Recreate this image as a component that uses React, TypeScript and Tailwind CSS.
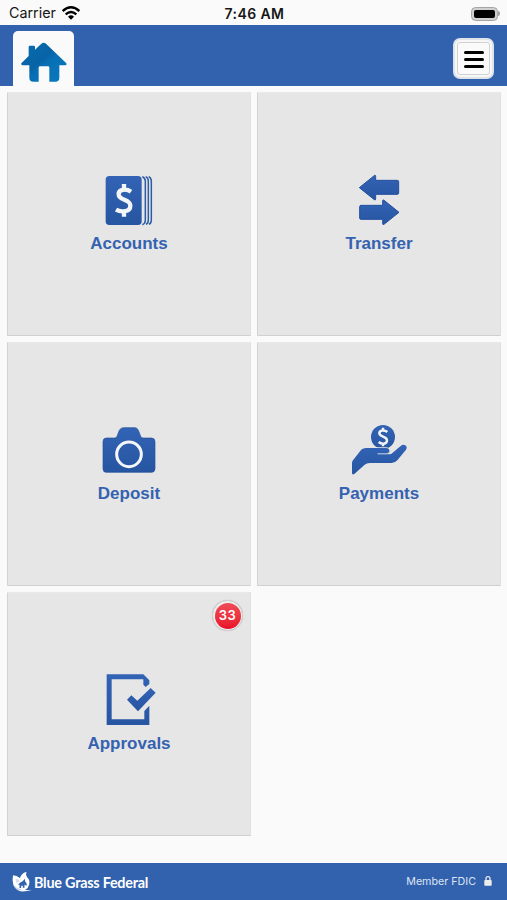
import type { ReactNode } from "react";

type Tile = {
  label: string;
  icon: ReactNode;
  badge?: number;
};

function TileIcon({ children }: { children: ReactNode }) {
  return (
    <svg viewBox="57 15 180 180" className="h-[60px] w-[60px]" fill="url(#tile-blue)" aria-hidden="true">
      {children}
    </svg>
  );
}

function AccountsIcon() {
  return (
    <TileIcon>
      <rect x="77" y="33" width="108" height="147" rx="11" />
      <path
        d="M187 35Q196 38 196 49V166Q196 176 187 179M197 35Q205 38 205 49V166Q205 175 198 178M206 35Q214 38 214 49V166Q214 175 207 178"
        fill="none"
        stroke="#2d5ba8"
        strokeWidth="4.5"
      />
      <path
        d="M153 80C142 72 116 70 116 88C116 108 151 101 151 122C151 142 122 142 108 134M132 57V74M132 138V155"
        fill="none"
        stroke="#f3f5f8"
        strokeWidth="13"
      />
    </TileIcon>
  );
}

function TransferIcon() {
  return (
    <TileIcon>
      <g stroke="#2450a0" strokeWidth="3" strokeLinejoin="round">
        <path d="M88 68L134 31Q137 30 137 34V46H202Q206 46 206 50V84Q206 88 202 88H137V102Q137 106 133 104Z" />
        <path d="M207 142L161 105Q158 104 158 108V121H93Q89 121 89 125V159Q89 163 93 163H158V176Q158 180 162 178Z" />
      </g>
    </TileIcon>
  );
}

function DepositIcon() {
  return (
    <TileIcon>
      <path
        d="M79 69H104Q109 69 111 64L118 46Q122 38 130 38H165Q172 38 175 46L182 64Q184 69 189 69H214Q225 69 225 80V161Q225 172 214 172H79Q69 172 69 161V80Q69 69 79 69Z"
        stroke="#24509c"
        strokeWidth="2"
      />
      <circle cx="147" cy="118" r="37" fill="none" stroke="#f5f7fa" strokeWidth="9" />
    </TileIcon>
  );
}

function PaymentsIcon() {
  return (
    <TileIcon>
      <circle cx="159" cy="66" r="36" />
      <path
        d="M172 51C164 44 148 44 148 55C148 67 171 63 171 76C171 89 154 88 146 81M159 38V47M159 86V94"
        fill="none"
        stroke="#f0f3f7"
        strokeWidth="7.5"
      />
      <path
        d="M66 144Q66 140 69 136L90 109Q97 99 109 99H168Q178 99 178 107Q178 115 168 115H143V118H178Q184 118 188 113L212 93Q219 87 226 91Q233 96 228 104L202 136Q195 144 185 144H119Q110 144 104 149L73 177Q66 181 66 173Z"
        stroke="#e6e6e6"
        strokeWidth="4"
        paintOrder="stroke"
      />
      <path d="M143 116H170Q178 115 180 108" fill="none" stroke="#8fa9d2" strokeWidth="2.5" />
    </TileIcon>
  );
}

function ApprovalsIcon() {
  return (
    <TileIcon>
      <path d="M80 28H190L208 46V57L197 66L190 59V43H95V163H193V138L208 122V180H80Z" />
      <path d="M141 104L154 91L172 107L212 69L227 83L174 139Z" />
    </TileIcon>
  );
}

const tiles: Tile[] = [
  { label: "Accounts", icon: <AccountsIcon /> },
  { label: "Transfer", icon: <TransferIcon /> },
  { label: "Deposit", icon: <DepositIcon /> },
  { label: "Payments", icon: <PaymentsIcon /> },
  { label: "Approvals", icon: <ApprovalsIcon />, badge: 33 },
];

function StatusBar() {
  return (
    <div className="grid h-[25px] grid-cols-3 items-center pt-[2px] pr-[7px] pl-[9px] font-['Inter',sans-serif] leading-none text-[#161616]">
      <div className="flex items-center gap-[6px]">
        <span className="text-[14.3px]">Carrier</span>
        <svg viewBox="0 0 54 42" className="h-[14px] w-[18px]" fill="none" stroke="#000" strokeWidth="7" aria-hidden="true">
          <path d="M2 15Q27-7 52 15" />
          <path d="M11 25Q27 11 43 25" />
          <path d="M18 32Q27 24 36 32L27 41Z" fill="#000" stroke="none" />
        </svg>
      </div>
      <span className="text-center text-[14px] font-semibold tracking-[0.4px]">7:46 AM</span>
      <div className="flex items-center justify-end">
        <div className="h-[14px] w-[27px] rounded-[4.5px] border border-[#a5a5a5] bg-[#d0d0d0] p-[2px]">
          <div className="h-full rounded-[2px] bg-black" />
        </div>
        <div className="h-[5px] w-[2px] rounded-r-full bg-[#a5a5a5]" />
      </div>
    </div>
  );
}

function Header() {
  return (
    <header className="flex h-[61px] items-end justify-between bg-[#3262ae] pr-[13px] pl-[13px]">
      <button aria-label="Home" className="flex h-[55px] w-[61px] justify-center rounded-t-[5px] bg-[#fafafa] pt-[11px]">
        <svg viewBox="63 126 138 120" className="h-[40px] w-[46px]" aria-hidden="true">
          <defs>
            <linearGradient id="home-blue" x1="0" y1="0" x2="1" y2="1">
              <stop offset="0" stopColor="#086cae" />
              <stop offset="0.45" stopColor="#0763a6" />
              <stop offset="0.55" stopColor="#0870b5" />
              <stop offset="1" stopColor="#0879bd" />
            </linearGradient>
          </defs>
          <path
            d="M64 190L86 168V141Q86 137 90 137H101Q105 137 105 141V149L124 131Q131 126 138 131L199 190Q201 196 195 196H178V233Q178 245 166 245H148V203Q148 199 144 199H120Q116 199 116 203V245H100Q88 245 88 233V196H69Q62 196 64 190Z"
            fill="url(#home-blue)"
          />
        </svg>
      </button>
      <button
        aria-label="Menu"
        className="mb-[7px] flex h-[41px] w-[41px] items-center justify-center rounded-[7px] border-2 border-[#dfe3ea] bg-[#f7f7f8] p-[2px]"
      >
        <span className="flex h-full w-full flex-col items-center justify-center gap-[4px] rounded-[3px] border border-[#d2d2d4] bg-[#fafafa] pt-px">
          <span className="h-[3px] w-5 rounded-full bg-black" />
          <span className="h-[3px] w-5 rounded-full bg-black" />
          <span className="h-[3px] w-5 rounded-full bg-black" />
        </span>
      </button>
    </header>
  );
}

function MenuTile({ label, icon, badge }: Tile) {
  return (
    <button className="relative flex h-[244px] flex-col items-center rounded-[1px] border border-t-[#e9e9e9] border-r-[#e0e0e0] border-b-[#d0d0d0] border-l-[#d3d3d3] bg-[#e6e6e6] pt-[77px]">
      {icon}
      <span className="mt-[3px] text-[17px] leading-[22px] font-bold text-[#3462b0]">{label}</span>
      {badge !== undefined && (
        <span className="absolute top-[7px] right-[7px] flex h-[31px] w-[31px] items-center justify-center rounded-full border border-[#cfcfcf] bg-[#f1eeee] shadow-[0_0_1px_#bbb]">
          <span className="flex h-[26px] w-[26px] items-center justify-center rounded-full bg-linear-to-b from-[#ef4a57] to-[#e90c28] font-['Inter',sans-serif] text-[13px] font-semibold tracking-[0.6px] text-white">
            {badge}
          </span>
        </span>
      )}
    </button>
  );
}

function Footer() {
  return (
    <footer className="flex h-[37px] items-center justify-between bg-[#3262ae] pr-[15px] pl-[12px] text-white">
      <div className="flex items-center gap-px">
        <svg viewBox="36 154 64 62" className="h-[21px] w-[21px]" aria-hidden="true">
          <path d="M39 166Q50 166 60 174Q67 158 80 156Q77 164 82 172Q92 181 88 195Q85 207 76 211L96 212Q79 216 62 215Q45 210 40 195Q36 182 39 166Z" fill="#fff" />
          <path d="M47 178Q54 176 58 182L66 175Q59 187 51 190Q46 185 47 178Z" fill="#d5dff0" />
          <path d="M54 196Q59 187 68 184Q74 180 75 176Q74 184 80 190Q82 194 80 198L74 195V204H69V198H64V205H59V195Z" fill="#3262ae" />
          <path d="M43 198Q49 210 64 210" fill="none" stroke="#87a4d2" strokeWidth="2" />
        </svg>
        <span className="pt-[4px] font-['Lato',sans-serif] text-[14.4px] leading-none font-bold tracking-[-0.24px]">
          Blue Grass Federal
        </span>
      </div>
      <div className="flex items-center gap-[8px]">
        <span className="pt-px font-['Inter',sans-serif] text-[10.7px] text-[#dce5f3]">Member FDIC</span>
        <svg viewBox="0 0 24 30" className="h-[10px] w-[8px]" aria-hidden="true">
          <path d="M6 14V8a6 6 0 0 1 12 0v6" fill="none" stroke="#e8e8e8" strokeWidth="4" />
          <rect x="1" y="12" width="22" height="17" rx="2" fill="#ededea" />
        </svg>
      </div>
    </footer>
  );
}

export default function App() {
  return (
    <div className="flex h-[900px] w-[507px] flex-col overflow-hidden bg-[#fafafa] font-['Liberation_Sans',Arial,sans-serif]">
      <svg className="absolute h-0 w-0" aria-hidden="true">
        <defs>
          <linearGradient id="tile-blue" x1="0" y1="0" x2="0" y2="1">
            <stop offset="0" stopColor="#3363b5" />
            <stop offset="1" stopColor="#2655a1" />
          </linearGradient>
        </defs>
      </svg>
      <StatusBar />
      <Header />
      <main className="grid flex-1 grid-cols-[244px_244px] content-start gap-[6px] pt-[6px] pl-[7px]">
        {tiles.map((tile) => (
          <MenuTile key={tile.label} {...tile} />
        ))}
      </main>
      <Footer />
    </div>
  );
}
